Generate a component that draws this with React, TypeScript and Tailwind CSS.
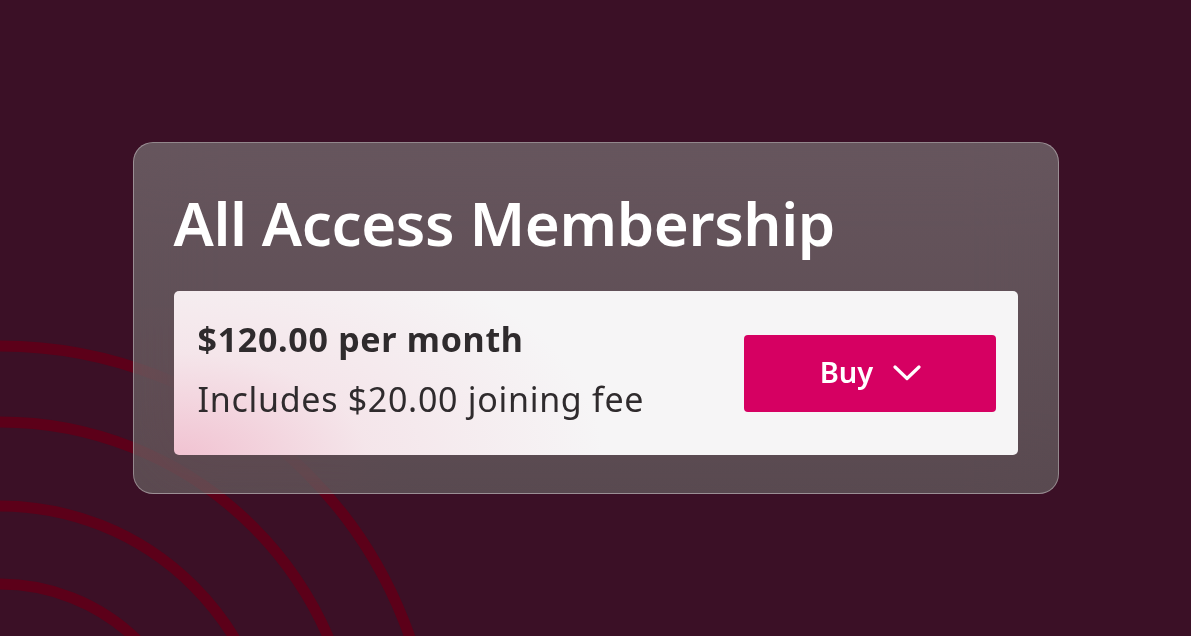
import React from "react";

export default function App() {
  const font = { fontFamily: '"Noto Sans", "Open Sans", sans-serif' };
  return (
    <div
      className="relative w-[1191px] h-[636px] overflow-hidden bg-[#3b1026] flex items-center justify-center"
      style={font}
    >
      <svg
        className="absolute inset-0"
        width="1191"
        height="636"
        viewBox="0 0 1191 636"
        fill="none"
      >
        {[196, 274, 358, 434].map((r) => (
          <circle key={r} cx="0" cy="780" r={r} stroke="#5c0019" strokeWidth="11" />
        ))}
      </svg>

      <div className="relative w-[926px] h-[352px] rounded-[20px] border border-white/35 bg-gradient-to-b from-[rgba(169,191,178,0.4)] to-[rgba(136,161,145,0.4)] backdrop-blur-[40px] px-10 pt-10 pb-[38px] flex flex-col">
        <h1 className="text-[60px] leading-[80px] font-semibold text-white tracking-[-0.4px]">
          All Access Membership
        </h1>
        <div
          className="mt-[28px] flex-1 rounded-[5px] bg-[#f6f5f6] flex items-center justify-between pl-6 pr-[22px]"
          style={{
            backgroundImage:
              "radial-gradient(ellipse 430px 240px at 0px 170px, rgba(238,165,188,0.65) 0%, rgba(242,200,212,0.35) 45%, rgba(246,245,246,0) 100%)",
          }}
        >
          <div className="flex flex-col text-[#2f2b2d] pb-[8px] tracking-[0.7px]">
            <div className="text-[34px] leading-[46px] font-bold">$120.00 per month</div>
            <div className="text-[34px] leading-[46px] mt-[14px]">Includes $20.00 joining fee</div>
          </div>
          <button className="w-[252px] h-[77px] rounded-[4px] bg-[#d60062] text-white flex items-center justify-center gap-[20px] pl-[2px]">
            <span className="text-[29px] font-semibold leading-none pb-[4px]">Buy</span>
            <svg width="28" height="16" viewBox="0 0 28 16" fill="none">
              <path d="M2 2 L14 13.5 L26 2" stroke="white" strokeWidth="3.2" strokeLinecap="round" strokeLinejoin="round" />
            </svg>
          </button>
        </div>
      </div>
    </div>
  );
}
